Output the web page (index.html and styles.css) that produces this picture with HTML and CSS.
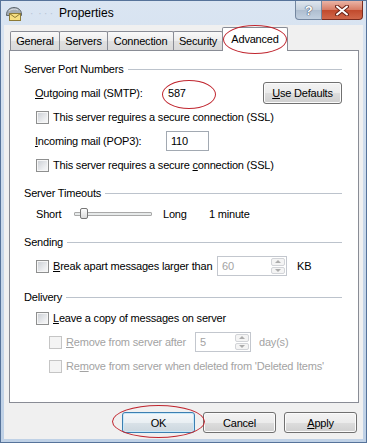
FILE: index.html
```html
<!doctype html>
<html lang="en">
<head>
<meta charset="utf-8">
<title>Properties</title>
<link rel="stylesheet" href="styles.css">
</head>
<body>
<div class="window">
	<div class="titlebar">
		<svg class="app-icon" width="18" height="16" viewBox="0 0 18 16">
			<path d="M1.5 9 C1.5 4 5 1.5 9 1.5 C13 1.5 16.5 4 16.5 8 L16.5 9.5 L1.5 9.5 Z" fill="#a3abb3" stroke="#5f6870"/>
			<path d="M4 5 C6 3 10 2.6 13 4" fill="none" stroke="#d8dde2"/>
			<rect x="4.5" y="7.5" width="11" height="7" fill="#f6de80" stroke="#8c7a36"/>
			<path d="M4.5 7.5 L10 11.5 L15.5 7.5" fill="none" stroke="#8c7a36"/>
		</svg>
		<span class="blur">· &nbsp;· · ·</span>
		<span class="title">Properties</span>
		<div class="caption">
			<span class="cap help">?</span>
			<span class="cap close">
				<svg width="14" height="11" viewBox="0 0 14 11">
					<path d="M2 1.5 L12 9.5 M12 1.5 L2 9.5" stroke="#6d2418" stroke-width="4" stroke-linecap="round"/>
					<path d="M2 1.5 L12 9.5 M12 1.5 L2 9.5" stroke="#fff" stroke-width="2" stroke-linecap="round"/>
				</svg>
			</span>
		</div>
	</div>

	<div class="client">
		<div class="tabs">
			<span class="tab t-general">General</span>
			<span class="tab t-servers">Servers</span>
			<span class="tab t-connection">Connection</span>
			<span class="tab t-security">Security</span>
			<span class="tab t-advanced active">Advanced</span>
		</div>

		<div class="panel">
			<div class="group">
				<div class="legend"><span>Server Port Numbers</span></div>
				<div class="row tall">
					<span class="lbl"><u>O</u>utgoing mail (SMTP):</span>
					<span class="port">587</span>
					<span class="btn defaults"><u>U</u>se Defaults</span>
				</div>
				<div class="row">
					<span class="cb"></span>
					<span>This server re<u>q</u>uires a secure connection (SSL)</span>
				</div>
				<div class="row tall">
					<span class="lbl"><u>I</u>ncoming mail (POP3):</span>
					<span class="edit">110</span>
				</div>
				<div class="row">
					<span class="cb"></span>
					<span>This server requires a secure <u>c</u>onnection (SSL)</span>
				</div>
			</div>

			<div class="group">
				<div class="legend"><span>Server Timeouts</span></div>
				<div class="row">
					<span class="short">Short</span>
					<span class="track"><span class="thumb"></span></span>
					<span class="long">Long</span>
					<span>1 minute</span>
				</div>
			</div>

			<div class="group">
				<div class="legend"><span>Sending</span></div>
				<div class="row tall">
					<span class="cb"></span>
					<span class="break-text"><u>B</u>reak apart messages larger than</span>
					<span class="spin w-kb"><span class="val">60</span><span class="arrows"><span class="up"></span><span class="down"></span></span></span>
					<span class="unit-kb">KB</span>
				</div>
			</div>

			<div class="group">
				<div class="legend"><span>Delivery</span></div>
				<div class="row">
					<span class="cb"></span>
					<span><u>L</u>eave a copy of messages on server</span>
				</div>
				<div class="row tall sub off">
					<span class="cb"></span>
					<span class="remove-text"><u>R</u>emove from server after</span>
					<span class="spin w-days"><span class="val">5</span><span class="arrows"><span class="up"></span><span class="down"></span></span></span>
					<span class="unit-days">day(s)</span>
				</div>
				<div class="row sub off">
					<span class="cb"></span>
					<span>Re<u>m</u>ove from server when deleted from 'Deleted Items'</span>
				</div>
			</div>
		</div>

		<div class="buttons">
			<span class="btn default">OK</span>
			<span class="btn">Cancel</span>
			<span class="btn"><u>A</u>pply</span>
		</div>
	</div>

	<div class="mark mark-tab"></div>
	<div class="mark mark-port"></div>
	<div class="mark mark-ok"></div>
</div>
</body>
</html>
```

FILE: styles.css
```css
body {
	margin: 0;
	background-color: #fff;
	font-family: "Liberation Sans", Arial, sans-serif;
	font-size: 11px;
	letter-spacing: -0.2px;
	color: #000;
}

u {
	text-decoration: underline;
	text-underline-offset: 1px;
}

.window {
	position: relative;
	width: 367px;
	height: 443px;
	box-sizing: border-box;
	border: 1px solid #56739a;
	background: linear-gradient(#dae5f2, #c6d6e9 60%, #bfd1e6);
	display: flex;
	flex-direction: column;
	overflow: hidden;
}

/* title bar */

.titlebar {
	height: 24px;
	flex: none;
	display: flex;
	align-items: center;
	padding: 0 3px 0 4px;
}

.app-icon {
	flex: none;
	margin-top: 1px;
}

.blur {
	width: 26px;
	margin-left: 7px;
	color: #b6c3d2;
	font-size: 10px;
	white-space: nowrap;
	overflow: hidden;
}

.title {
	margin-left: 3px;
	font-size: 12px;
	letter-spacing: 0;
}

.caption {
	margin-left: auto;
	align-self: flex-start;
	display: flex;
}

.cap {
	height: 19px;
	box-sizing: border-box;
	display: flex;
	align-items: center;
	justify-content: center;
}

.help {
	width: 27px;
	border: 1px solid #7487a0;
	border-top: none;
	border-radius: 0 0 0 4px;
	background: linear-gradient(#dfe6ee, #c3cfdc 50%, #aebdcf 51%, #c2d0e0);
	color: #fff;
	font-size: 13px;
	font-weight: bold;
	text-shadow: 0 0 1px #4c5b70, 0 0 1px #4c5b70, 0 0 1px #4c5b70;
}

.close {
	width: 41px;
	border: 1px solid #7b2c1e;
	border-top: none;
	border-left: none;
	border-radius: 0 0 4px 0;
	background: linear-gradient(#eab4a6, #d77b63 50%, #c14a2d 51%, #d0674a);
}

/* client area */

.client {
	flex: 1;
	margin: 0 3px 3px;
	padding: 0 4px 0 5px;
	background-color: #f0f0f0;
	display: flex;
	flex-direction: column;
}

.tabs {
	height: 25px;
	flex: none;
	display: flex;
	align-items: flex-end;
	padding-left: 1px;
	position: relative;
	z-index: 1;
}

.tab {
	height: 19px;
	box-sizing: border-box;
	margin-left: -1px;
	border: 1px solid #898c95;
	border-bottom: none;
	border-radius: 2px 2px 0 0;
	background: linear-gradient(#f9f9f9, #ececec 50%, #e0e0e0 51%, #d9d9d9);
	display: flex;
	align-items: center;
	justify-content: center;
	padding-bottom: 1px;
}

.t-general { width: 50px; margin-left: 0; }
.t-servers { width: 49px; }
.t-connection { width: 67px; }
.t-security { width: 50px; }

.tab.active {
	width: 66px;
	height: 24px;
	margin-bottom: -1px;
	background: #fff;
	padding-bottom: 2px;
}

.panel {
	height: 353px;
	flex: none;
	box-sizing: border-box;
	border: 1px solid #898c95;
	background-color: #fff;
	padding: 10px 16px 0 14px;
}

.group + .group {
	margin-top: 12px;
}

.legend {
	height: 16px;
	display: flex;
	align-items: center;
}

.legend::after {
	content: "";
	flex: 1;
	height: 1px;
	margin-left: 4px;
	background-color: #bcc3cc;
}

.row {
	height: 16px;
	margin-top: 5px;
	padding-left: 11px;
	display: flex;
	align-items: center;
	white-space: nowrap;
}

.row.tall {
	height: 22px;
}

.row.sub {
	padding-left: 24px;
}

.row.off {
	color: #a3a3a3;
}

.lbl {
	width: 131px;
	flex: none;
}

.port {
	width: 44px;
	padding-left: 2px;
}

.edit {
	width: 43px;
	height: 20px;
	box-sizing: border-box;
	border: 1px solid #a2a9b2;
	padding-left: 4px;
	display: flex;
	align-items: center;
}

/* checkbox */

.cb {
	width: 13px;
	height: 13px;
	flex: none;
	box-sizing: border-box;
	margin: 0 4px 0 1px;
	border: 1px solid #8e8f8f;
	box-shadow: inset 0 0 0 1px #f6f6f6;
	background: linear-gradient(135deg, #c9cdd3, #eeeff1 70%, #f8f8f8);
}

.off .cb {
	border-color: #c5c5c5;
	background: #f4f4f4;
	box-shadow: none;
}

/* slider */

.short {
	width: 38px;
	padding-left: 1px;
}

.track {
	position: relative;
	width: 78px;
	height: 4px;
	box-sizing: border-box;
	border: 1px solid #a9a9a9;
	border-radius: 1px;
	background-color: #e7eaea;
}

.thumb {
	position: absolute;
	left: 5px;
	top: -5px;
	width: 8px;
	height: 11px;
	box-sizing: border-box;
	border: 1px solid #767676;
	border-radius: 2px;
	background: linear-gradient(#fdfdfd, #dcdcdc);
}

.long {
	width: 46px;
	margin-left: 11px;
}

/* spin boxes */

.break-text {
	width: 164px;
}

.remove-text {
	width: 129px;
}

.spin {
	height: 20px;
	box-sizing: border-box;
	border: 1px solid #c3c7ce;
	display: flex;
	color: #a3a3a3;
}

.w-kb { width: 70px; }
.w-days { width: 56px; }

.spin .val {
	flex: 1;
	padding-left: 4px;
	display: flex;
	align-items: center;
}

.arrows {
	width: 16px;
	display: flex;
	flex-direction: column;
	padding: 1px;
	gap: 1px;
	box-sizing: border-box;
}

.arrows span {
	flex: 1;
	border: 1px solid #d2d4d8;
	border-radius: 2px;
	background-color: #f4f4f4;
	display: flex;
	align-items: center;
	justify-content: center;
}

.arrows .up::after {
	content: "";
	border: 3px solid transparent;
	border-bottom-color: #acacac;
	border-top: none;
}

.arrows .down::after {
	content: "";
	border: 3px solid transparent;
	border-top-color: #acacac;
	border-bottom: none;
}

.unit-kb {
	margin-left: 10px;
	color: #000;
}

.unit-days {
	margin-left: 8px;
}

/* buttons */

.btn {
	width: 73px;
	height: 21px;
	box-sizing: border-box;
	border: 1px solid #707070;
	border-radius: 3px;
	box-shadow: inset 0 0 0 1px #fbfbfb;
	background: linear-gradient(#f3f3f3, #ebebeb 50%, #dddddd 51%, #cfcfcf);
	display: flex;
	align-items: center;
	justify-content: center;
	flex: none;
}

.btn.defaults {
	width: 79px;
	height: 22px;
	margin-left: auto;
}

.btn.default {
	border-color: #3c7fb1;
	box-shadow: inset 0 0 0 1px #c8e8f9;
	background: linear-gradient(#f5f8fa, #e9eff3 50%, #d9e2e8 51%, #ccd7df);
}

.buttons {
	display: flex;
	justify-content: flex-end;
	gap: 8px;
	margin-top: 9px;
	padding-right: 2px;
}

/* red hand-drawn marks */

.mark {
	position: absolute;
	border: 1px solid #c0262f;
	border-radius: 50%;
	z-index: 2;
}

.mark-tab {
	left: 222px;
	top: 24px;
	width: 62px;
	height: 27px;
}

.mark-port {
	left: 161px;
	top: 79px;
	width: 52px;
	height: 27px;
}

.mark-ok {
	left: 111px;
	top: 404px;
	width: 91px;
	height: 31px;
}
```
